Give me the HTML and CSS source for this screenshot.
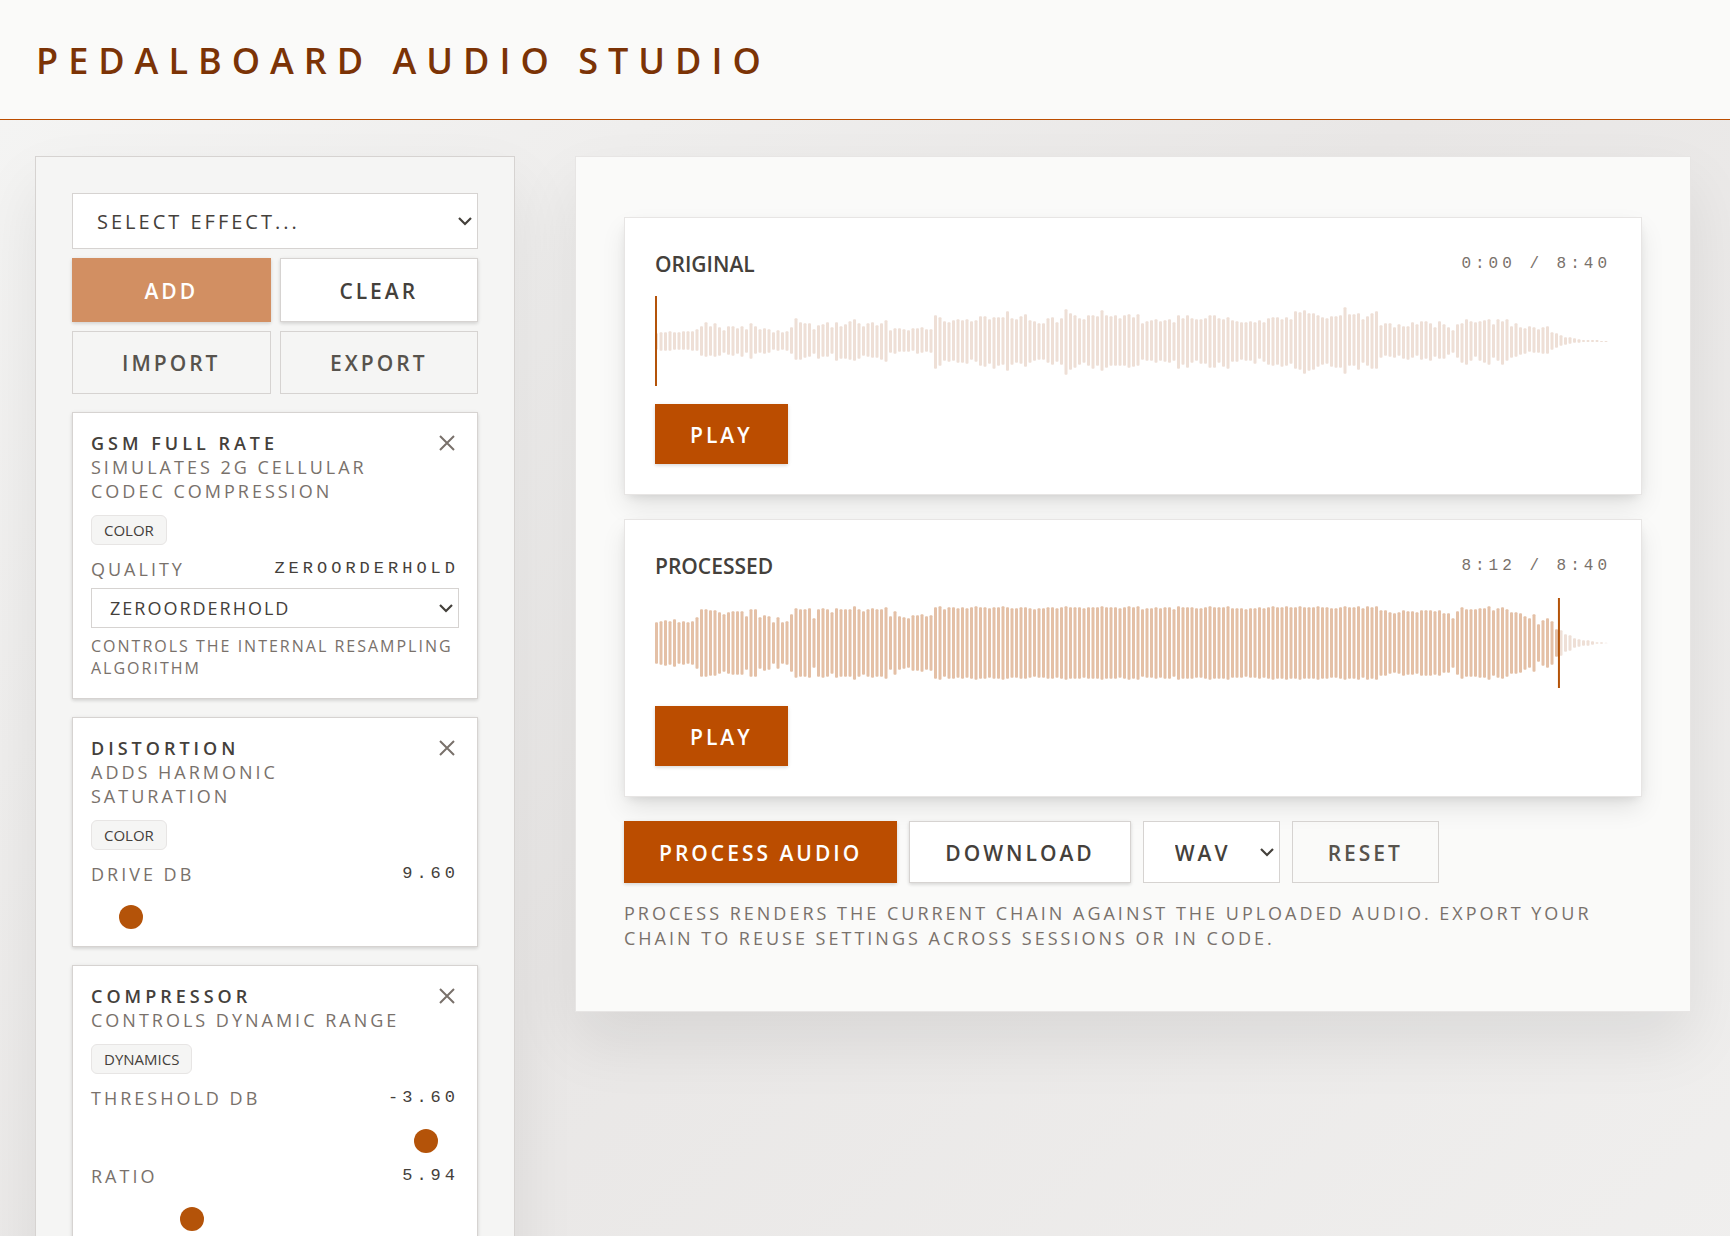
FILE: index.html
```html
<!DOCTYPE html>
<html lang="en">
<head>
<meta charset="utf-8">
<meta name="viewport" content="width=device-width, initial-scale=1">
<title>Pedalboard Audio Studio</title>
<link rel="stylesheet" href="styles.css">
</head>
<body>
<header class="header"><h1 class="title">PEDALBOARD AUDIO STUDIO</h1></header>
<main class="layout">
  <aside class="sidebar">
    <div class="toolbar">
      <select class="select effect-select" aria-label="Effect"><option>SELECT EFFECT...</option></select>
      <button class="btn btn-primary btn-muted" type="button">ADD</button>
      <button class="btn btn-outline" type="button">CLEAR</button>
      <button class="btn btn-ghost" type="button">IMPORT</button>
      <button class="btn btn-ghost" type="button">EXPORT</button>
    </div>

    <section class="effect">
      <div class="effect-head">
        <div>
          <h2 class="effect-name">GSM FULL RATE</h2>
          <p class="effect-desc">SIMULATES 2G CELLULAR CODEC COMPRESSION</p>
        </div>
        <button class="remove" type="button" aria-label="Remove GSM Full Rate"><svg viewBox="0 0 14 14" width="14" height="14"><path d="M0 0 14 14M14 0 0 14"/></svg></button>
      </div>
      <span class="badge">COLOR</span>
      <div class="param">
        <div class="param-row"><label for="quality">QUALITY</label><output class="value">ZEROORDERHOLD</output></div>
        <select class="select param-select" id="quality"><option>ZEROORDERHOLD</option></select>
        <p class="hint">CONTROLS THE INTERNAL RESAMPLING ALGORITHM</p>
      </div>
    </section>

    <section class="effect">
      <div class="effect-head">
        <div>
          <h2 class="effect-name">DISTORTION</h2>
          <p class="effect-desc">ADDS HARMONIC SATURATION</p>
        </div>
        <button class="remove" type="button" aria-label="Remove Distortion"><svg viewBox="0 0 14 14" width="14" height="14"><path d="M0 0 14 14M14 0 0 14"/></svg></button>
      </div>
      <span class="badge">COLOR</span>
      <div class="param">
        <div class="param-row"><label for="drive">DRIVE DB</label><output class="value">9.60</output></div>
        <input class="slider" id="drive" type="range" min="0" max="120" step="0.1" value="9.6">
      </div>
    </section>

    <section class="effect">
      <div class="effect-head">
        <div>
          <h2 class="effect-name">COMPRESSOR</h2>
          <p class="effect-desc">CONTROLS DYNAMIC RANGE</p>
        </div>
        <button class="remove" type="button" aria-label="Remove Compressor"><svg viewBox="0 0 14 14" width="14" height="14"><path d="M0 0 14 14M14 0 0 14"/></svg></button>
      </div>
      <span class="badge">DYNAMICS</span>
      <div class="param">
        <div class="param-row"><label for="threshold">THRESHOLD DB</label><output class="value">-3.60</output></div>
        <input class="slider" id="threshold" type="range" min="-60" max="0" step="0.1" value="-3.6">
      </div>
      <div class="param">
        <div class="param-row"><label for="ratio">RATIO</label><output class="value">5.94</output></div>
        <input class="slider" id="ratio" type="range" min="1" max="20" step="0.01" value="5.94">
      </div>
    </section>
  </aside>

  <section class="workspace">
    <article class="track">
      <div class="track-head"><h2 class="track-name">ORIGINAL</h2><span class="time">0:00 / 8:40</span></div>
      <svg class="wave" data-track="original" data-progress="0" viewBox="0 -135 2868 270" preserveAspectRatio="none" role="img" aria-label="Original waveform"></svg>
      <button class="btn btn-primary btn-play" type="button">PLAY</button>
    </article>
    <article class="track">
      <div class="track-head"><h2 class="track-name">PROCESSED</h2><span class="time">8:12 / 8:40</span></div>
      <svg class="wave" data-track="processed" data-progress="0.9445" viewBox="0 -135 2868 270" preserveAspectRatio="none" role="img" aria-label="Processed waveform"></svg>
      <button class="btn btn-primary btn-play" type="button">PLAY</button>
    </article>
    <div class="actions">
      <button class="btn btn-primary" type="button">PROCESS AUDIO</button>
      <button class="btn btn-outline" type="button">DOWNLOAD</button>
      <select class="select format-select" aria-label="Download format"><option>WAV</option></select>
      <button class="btn btn-ghost" type="button">RESET</button>
    </div>
    <p class="note">PROCESS RENDERS THE CURRENT CHAIN AGAINST THE UPLOADED AUDIO. EXPORT YOUR CHAIN TO REUSE SETTINGS ACROSS SESSIONS OR IN CODE.</p>
  </section>
</main>
<script src="waveform.js"></script>
</body>
</html>
```
FILE: styles.css
```css
*, *::before, *::after { box-sizing: border-box; }

:root {
  --amber: #bb4d00;
  --line: #d6d3d1;
  --line-soft: #e7e5e4;
  --muted: #79716b;
  --text: #44403b;
  --sans: "Segoe UI", "Open Sans", "Noto Sans", sans-serif;
  --mono: Consolas, "Liberation Mono", monospace;
  --shadow-small: 0 1px 4px rgba(0, 0, 0, .1), 0 2px 3px rgba(0, 0, 0, .06);
}

body {
  margin: 0;
  min-height: 100vh;
  overflow-x: hidden;
  background: linear-gradient(135deg, #f5f5f4, #e9e7e6 50%, #f0efee);
  color: var(--text);
  font-family: var(--sans);
  font-size: 18px;
  line-height: 24px;
}

h1, h2, p { margin: 0; font-size: inherit; }
button, select { font: inherit; color: inherit; margin: 0; }

.header {
  padding: 37px 36px 35px;
  border-bottom: 1px solid var(--amber);
  background: #fafaf9;
}
.title {
  color: #7b3306;
  font-size: 36px;
  line-height: 47px;
  font-weight: 600;
  letter-spacing: 10px;
}

.layout {
  display: grid;
  grid-template-columns: 480px minmax(0, 1fr);
  align-items: start;
  gap: 60px;
  padding: 36px 39px 36px 35px;
}

.sidebar, .workspace {
  box-shadow: 0 30px 60px rgba(0, 0, 0, .08);
}
.sidebar {
  display: grid;
  gap: 18px;
  padding: 36px;
  border: 1px solid var(--line);
  background: #f5f5f4;
}
.toolbar {
  display: grid;
  grid-template-columns: 1fr 1fr;
  gap: 9px;
}

.btn {
  padding: 17px 35px 15px;
  border: 0;
  border-radius: 0;
  font-size: 21px;
  line-height: 30px;
  font-weight: 600;
  letter-spacing: 3px;
}
.btn-primary {
  background: var(--amber);
  color: #fff;
  box-shadow: var(--shadow-small);
}
.btn-muted { background: #d28f62; }
.btn-outline, .btn-ghost {
  padding: 16px 35px 14px;
  border: 1px solid var(--line);
}
.btn-outline {
  background: #fff;
  box-shadow: var(--shadow-small);
}
.btn-ghost {
  background: transparent;
  color: #57534d;
}
.toolbar .btn-primary { padding: 18px 12px 16px; }
.toolbar .btn-outline { padding: 17px 12px 15px; }
.toolbar .btn-ghost { padding: 16px 12px 15px; }
.btn-play { padding: 16px 35px 14px; justify-self: start; }

.select {
  appearance: none;
  border: 1px solid var(--line);
  border-radius: 0;
  background: #fff url("data:image/svg+xml,%3Csvg xmlns='http://www.w3.org/2000/svg' width='14' height='9' viewBox='0 0 14 9'%3E%3Cpath d='M1 1l6 6 6-6' fill='none' stroke='%2344403b' stroke-width='2.2'/%3E%3C/svg%3E") no-repeat right 5px center;
}
.effect-select {
  grid-column: 1 / -1;
  padding: 13px 24px 11px;
  font-size: 20px;
  line-height: 30px;
  letter-spacing: 3px;
}
.param-select {
  width: 100%;
  padding: 7px 18px;
  letter-spacing: 2px;
}
.format-select {
  width: 137px;
  padding: 16px 31px 14px;
  font-size: 21px;
  font-weight: 600;
  letter-spacing: 3px;
}

.effect {
  display: grid;
  gap: 12px;
  padding: 18px;
  border: 1px solid var(--line);
  background: #fff;
  box-shadow: var(--shadow-small);
}
.effect-head {
  display: flex;
  justify-content: space-between;
  align-items: flex-start;
  gap: 24px;
}
.effect-name { font-weight: 600; letter-spacing: 4px; }
.effect-desc { color: var(--muted); letter-spacing: 3px; }
.remove {
  display: flex;
  padding: 5px;
  border: 0;
  background: none;
}
.remove svg {
  overflow: visible;
  fill: none;
  stroke: var(--muted);
  stroke-width: 2;
}
.badge {
  justify-self: start;
  padding: 3px 12px;
  border: 1px solid var(--line-soft);
  border-radius: 6px;
  background: #f5f5f4;
  font-size: 15px;
  line-height: 22px;
}
.param { display: grid; gap: 7px; }
.param-row {
  display: flex;
  justify-content: space-between;
  color: var(--muted);
  letter-spacing: 3px;
}
.value {
  color: var(--text);
  font-family: var(--mono);
  font-size: 17px;
  letter-spacing: 4px;
}
.hint {
  padding-bottom: 1px;
  color: var(--muted);
  font-size: 16px;
  line-height: 22px;
  letter-spacing: 2px;
}
.slider {
  appearance: none;
  width: 100%;
  height: 24px;
  margin: 12px 0 -1px;
  background: transparent;
}
.slider::-webkit-slider-thumb {
  appearance: none;
  width: 24px;
  height: 24px;
  border-radius: 50%;
  background: #b45309;
}

.workspace {
  display: grid;
  gap: 24px;
  padding: 60px 48px;
  border: 1px solid var(--line-soft);
  background: #fafaf9;
}
.track {
  display: grid;
  gap: 18px;
  padding: 30px;
  border: 1px solid var(--line-soft);
  background: #fff;
  box-shadow: 0 12px 24px -2px rgba(0, 0, 0, .1), 0 4px 10px -4px rgba(0, 0, 0, .12);
}
.track-head {
  display: flex;
  justify-content: space-between;
  align-items: center;
  padding-top: 2px;
}
.track-name { font-size: 21px; line-height: 28px; font-weight: 600; }
.time {
  color: var(--muted);
  font-family: var(--mono);
  font-size: 16px;
  letter-spacing: 4px;
}
.wave { display: block; width: 100%; height: 90px; }
.bars { fill: #eedfd6; }
.bars-played { fill: #e4c0a6; }
.cursor { fill: #b45309; }

.actions { display: flex; flex-wrap: wrap; gap: 12px; }
.note {
  margin-top: -6px;
  color: var(--muted);
  line-height: 25px;
  letter-spacing: 3px;
}
```
FILE: waveform.js
```js
// Peaks above and below the zero line, one entry per bar.
// The original is stored as top/bottom pairs around 183, the processed take as tops around 189.
const original = `160/209 157/212 157/212 154/212 157/209 157/209 154/209 154/209 154/212 148/212
139/227 127/230 139/227 130/230 142/227 151/218 139/224 139/227 145/221 139/230
148/218 130/236 139/221 148/218 145/221 148/218 157/209 151/212 157/209 154/212
142/221 115/239 127/239 130/233 130/230 148/221 136/236 133/230 127/230 142/221
127/242 139/236 133/236 124/239 118/242 130/236 139/227 130/230 127/233 136/233
130/239 121/245 151/218 145/221 145/215 148/215 151/215 145/212 145/221 142/218
148/215 148/218 106/266 112/257 124/242 127/245 121/242 118/248 121/248 118/251
124/239 121/245 109/257 109/260 118/251 112/266 112/257 112/254 94/272 115/254
118/248 109/251 103/260 121/248 124/242 130/239 130/239 115/248 112/254 127/245
115/254 88/284 100/269 106/263 115/254 118/248 106/257 106/266 109/257 91/272
106/263 109/257 106/257 115/257 106/257 103/263 112/260 103/257 130/239 124/242
121/242 118/248 124/242 121/245 118/248 127/242 106/266 115/254 106/263 115/248
118/242 118/251 115/251 106/263 106/263 115/248 118/260 112/266 121/245 124/245
127/239 127/242 124/242 127/251 121/236 127/245 115/254 112/257 112/254 118/260
112/257 118/251 94/266 97/269 91/281 100/272 100/269 106/260 112/254 115/251
109/260 109/263 106/263 82/281 103/257 103/257 100/269 118/248 109/257 100/266
94/266 136/233 130/227 130/230 142/233 133/227 139/236 139/239 127/233 133/227
124/239 124/236 130/242 142/230 124/236 133/236 142/224 151/218 133/233 130/248
118/254 124/242 127/230 124/242 121/248 118/254 133/233 118/242 124/254 118/242
139/233 130/230 142/224 145/221 139/215 142/218 148/218 142/221 139/221 157/209
160/203 166/197 172/194 172/191 175/188 178/188 180/186 180/186 180/186 180/186
183/186 183/186`.split(/\s+/).map(p => p.split("/").map(v => v - 183));

const processed = `127 124 121 124 118 127 124 127 124 112 88 88 91 91 97 103 97 94 94 94
109 88 88 112 106 109 127 112 127 124 103 85 88 88 85 115 88 85 88 97
85 88 88 88 79 88 94 88 85 88 88 82 109 94 109 112 115 106 106 103
109 106 82 79 88 82 82 85 82 85 82 79 82 82 85 82 82 79 82 85
85 82 82 85 88 85 85 82 82 85 82 79 82 82 82 85 82 82 82 79
82 82 82 85 82 79 82 79 88 85 85 82 85 82 82 88 79 82 82 82
85 85 82 79 82 82 82 79 85 85 85 88 85 85 82 85 82 79 82 82
79 82 82 79 82 82 82 79 82 82 85 85 82 79 82 82 79 85 79 82
79 91 91 97 100 97 91 94 94 97 91 91 91 94 91 100 100 115 94 82
88 88 88 85 85 79 91 85 82 88 97 97 100 109 115 103 133 121 115 124
148 151 163 166 175 178 181 181 184 187 187 188`.split(/\s+/).map(v => [v - 189, 189 - v]);

const peaks = { original, processed };
const SVG = "http://www.w3.org/2000/svg";
const WIDTH = 2868;
const PITCH = 13.5;
const BAR = 9;

function add(parent, name, attrs) {
  const el = document.createElementNS(SVG, name);
  for (const key in attrs) el.setAttribute(key, attrs[key]);
  parent.append(el);
  return el;
}

document.querySelectorAll(".wave").forEach(svg => {
  const playedTo = svg.dataset.progress * WIDTH;
  const unplayed = add(svg, "g", { class: "bars" });
  const played = add(svg, "g", { class: "bars-played" });
  peaks[svg.dataset.track].forEach(([top, bottom], i) => {
    const x = i * PITCH;
    add(x < playedTo ? played : unplayed, "rect", {
      x, y: top, width: BAR, height: Math.max(2, bottom - top), rx: 3
    });
  });
  add(svg, "rect", { class: "cursor", x: playedTo, y: -135, width: 6, height: 270 });
});
```
